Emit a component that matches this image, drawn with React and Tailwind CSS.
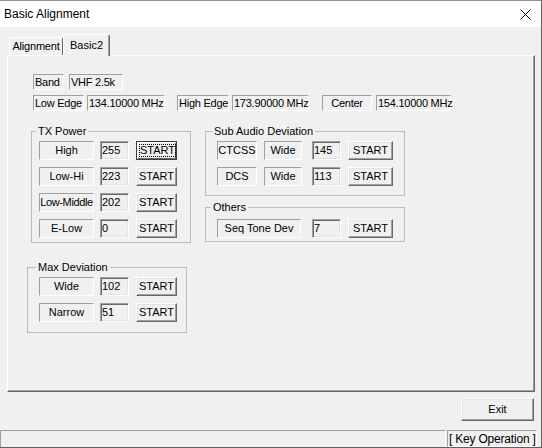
import React from "react";

const font = "font-['Liberation_Sans',Arial,sans-serif]";
const sunken = "border border-t-[#a0a0a0] border-l-[#a0a0a0] border-r-white border-b-white";
const edit =
  "border border-t-[#a0a0a0] border-l-[#a0a0a0] border-r-white border-b-white shadow-[inset_1px_1px_0_#696969,inset_-1px_-1px_0_#e3e3e3]";
const raised =
  "border border-t-white border-l-white border-r-[#696969] border-b-[#696969] shadow-[inset_-1px_-1px_0_#a0a0a0,inset_1px_1px_0_#e3e3e3]";

function Static({ className = "", center = false, children }) {
  return (
    <div className={`${sunken} flex h-[16px] items-center ${center ? "justify-center" : "pl-[1px]"} leading-none whitespace-nowrap tracking-[-0.25px] ${className}`}>
      {children}
    </div>
  );
}

function Cell({ className = "", children }) {
  return (
    <div className={`${sunken} flex h-[19px] items-center justify-center leading-none whitespace-nowrap ${className}`}>
      {children}
    </div>
  );
}

function Value({ className = "", children }) {
  return <div className={`${edit} flex h-[19px] items-center pl-[1px] leading-none ${className}`}>{children}</div>;
}

function Start({ className = "", focused = false }) {
  if (focused) {
    return (
      <div className={`flex h-[19px] border border-[#3a3a3a] bg-[#f0f0f0] p-[2px] shadow-[inset_1px_1px_0_#fff,inset_-1px_-1px_0_#696969] ${className}`}>
        <div className="flex flex-1 items-center justify-center border border-dotted border-black leading-none">START</div>
      </div>
    );
  }
  return <div className={`${raised} flex h-[19px] items-center justify-center leading-none ${className}`}>START</div>;
}

function Group({ title, legendClass, className = "", bodyClass, children }) {
  return (
    <fieldset className={`border border-[#bcbcbc] ${className}`}>
      <legend className={`px-[2px] leading-[13px] ${legendClass}`}>{title}</legend>
      <div className={`flex flex-col gap-[7px] ${bodyClass}`}>{children}</div>
    </fieldset>
  );
}

const txRows = [
  ["High", "255"],
  ["Low-Hi", "223"],
  ["Low-Middle", "202"],
  ["E-Low", "0"],
];

export default function App() {
  return (
    <div className={`flex h-[448px] w-[542px] flex-col border-t border-r border-b border-t-[#8c8c8c] border-r-[#5f5f5f] border-b-[#5f5f5f] bg-[#f0f0f0] text-[11px] text-black ${font}`}>
      {/* title bar */}
      <div className="flex h-[26px] items-center justify-between bg-white pl-[4px] pr-[10px]">
        <span className="text-[12px]">Basic Alignment</span>
        <svg width="11" height="11" viewBox="0 0 11 11">
          <path d="M0.5 0.5 L10.5 10.5 M10.5 0.5 L0.5 10.5" stroke="#000" strokeWidth="1" />
        </svg>
      </div>

      <div className="pl-[7px] pt-[7px]">
        {/* tabs */}
        <div className="flex h-[21px] items-end">
          <div className="ml-[2px] flex h-[18px] w-[54px] items-center justify-center rounded-t-[2px] border-t border-l border-r border-t-white border-l-white border-r-[#696969] tracking-[-0.2px]">
            Alignment
          </div>
          <div className="relative z-10 -mb-px flex h-[22px] w-[47px] items-center justify-center rounded-t-[2px] border-t border-l border-r border-t-white border-l-white border-r-[#696969] bg-[#f0f0f0] pb-[1px] shadow-[inset_-1px_0_0_#a0a0a0]">
            Basic2
          </div>
        </div>

        {/* panel */}
        <div className="h-[337px] w-[528px] border border-t-white border-l-white border-r-[#696969] border-b-[#696969] pl-[19px] pt-[18px] shadow-[inset_-1px_-1px_0_#a0a0a0]">
          <div className="ml-[6px] flex">
            <Static className="w-[31px]">Band</Static>
            <Static className="ml-[5px] w-[54px]">VHF 2.5k</Static>
          </div>
          <div className="ml-[6px] mt-[5px] flex">
            <Static className="w-[51px]">Low Edge</Static>
            <Static className="ml-[3px] w-[78px]">134.10000 MHz</Static>
            <Static className="ml-[12px] w-[52px]">High Edge</Static>
            <Static className="ml-[3px] w-[77px]">173.90000 MHz</Static>
            <Static center className="ml-[13px] w-[50px]">Center</Static>
            <Static className="ml-[4px] w-[75px]">154.10000 MHz</Static>
          </div>

          <div className="mt-[14px] flex items-start">
            <div className="flex w-[164px] flex-col">
              <Group title="TX Power" className="ml-[4px] w-[160px]" legendClass="ml-[4px]" bodyClass="pl-[7px] pt-[3px] pb-[4px]">
                {txRows.map(([label, val], i) => (
                  <div key={label} className="flex h-[19px]">
                    <Cell className={`w-[55px] ${label === "Low-Middle" ? "tracking-[-0.35px]" : ""}`}>{label}</Cell>
                    <Value className="ml-[6px] w-[29px]">{val}</Value>
                    <Start focused={i === 0} className="ml-[7px] w-[41px]" />
                  </div>
                ))}
              </Group>

              <Group title="Max Deviation" className="mt-[18px] w-[160px]" legendClass="ml-[8px]" bodyClass="pl-[11px] pt-[3px] pb-[10px]">
                <div className="flex h-[19px]">
                  <Cell className="w-[55px]">Wide</Cell>
                  <Value className="ml-[6px] w-[29px]">102</Value>
                  <Start className="ml-[7px] w-[41px]" />
                </div>
                <div className="flex h-[19px]">
                  <Cell className="w-[55px]">Narrow</Cell>
                  <Value className="ml-[6px] w-[29px]">51</Value>
                  <Start className="ml-[7px] w-[41px]" />
                </div>
              </Group>
            </div>

            <div className="ml-[14px] flex w-[200px] flex-col">
              <Group title="Sub Audio Deviation" legendClass="ml-[6px]" bodyClass="pl-[11px] pt-[3px] pb-[9px]">
                <div className="flex h-[19px]">
                  <Cell className="w-[40px]">CTCSS</Cell>
                  <Cell className="ml-[7px] w-[38px]">Wide</Cell>
                  <Value className="ml-[10px] w-[29px]">145</Value>
                  <Start className="ml-[7px] w-[45px]" />
                </div>
                <div className="flex h-[19px]">
                  <Cell className="w-[40px]">DCS</Cell>
                  <Cell className="ml-[7px] w-[38px]">Wide</Cell>
                  <Value className="ml-[10px] w-[29px]">113</Value>
                  <Start className="ml-[7px] w-[45px]" />
                </div>
              </Group>

              <Group title="Others" className="mt-[5px]" legendClass="ml-[5px]" bodyClass="pl-[11px] pt-[5px] pb-[3px]">
                <div className="flex h-[19px]">
                  <Cell className="w-[84px]">Seq Tone Dev</Cell>
                  <Value className="ml-[11px] w-[29px]">7</Value>
                  <Start className="ml-[7px] w-[45px]" />
                </div>
              </Group>
            </div>
          </div>
        </div>
      </div>

      <div className={`${raised} mr-[7px] mt-[6px] flex h-[23px] w-[73px] items-center justify-center self-end`}>Exit</div>

      {/* status bar */}
      <div className="mt-[9px] flex h-[17px]">
        <div className="w-[446px] border-t border-l border-r border-t-[#a0a0a0] border-l-[#a0a0a0] border-r-white" />
        <div className={`${sunken} ml-[1px] flex w-[90px] items-center whitespace-nowrap pl-[1px] text-[12px] leading-none tracking-[-0.2px]`}>
          [ Key Operation ]
        </div>
      </div>
    </div>
  );
}
